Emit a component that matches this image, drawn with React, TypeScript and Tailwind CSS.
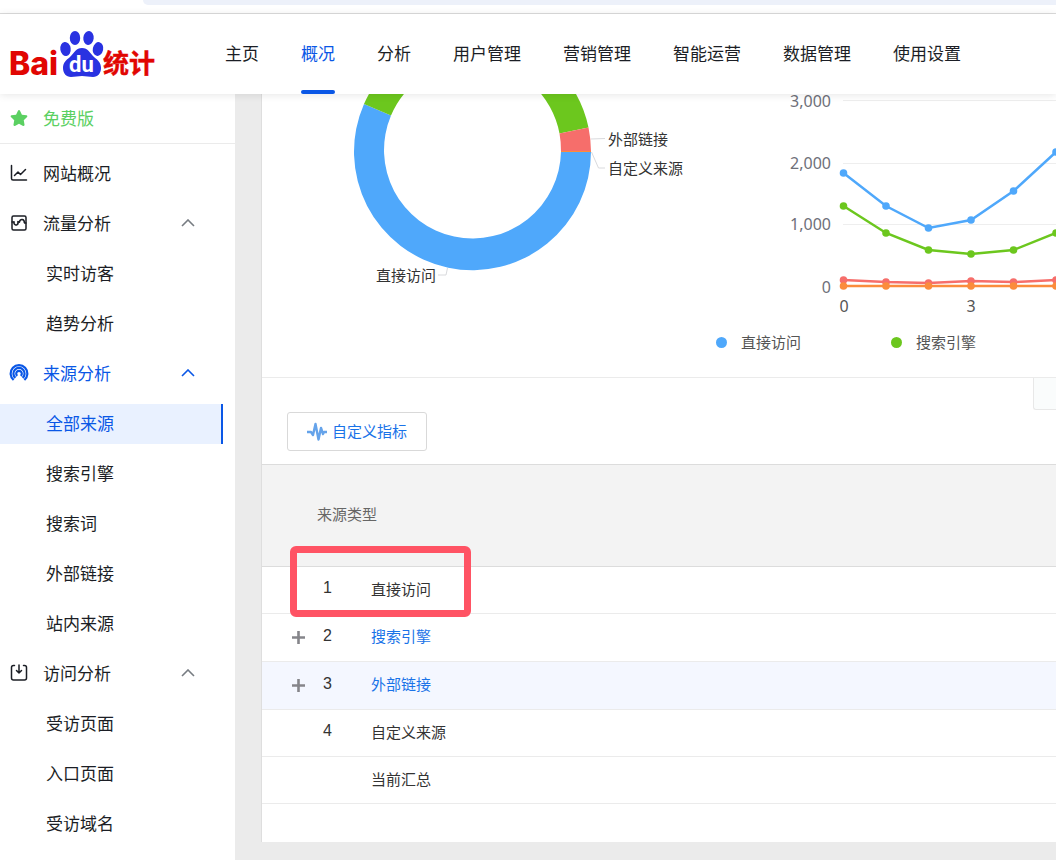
import { FaStar } from "react-icons/fa"

const navItems = ["主页", "概况", "分析", "用户管理", "营销管理", "智能运营", "数据管理", "使用设置"]

const menu = [
  { label: "网站概况", icon: "overview", active: false, children: [] },
  { label: "流量分析", icon: "traffic", active: false, children: ["实时访客", "趋势分析"] },
  { label: "来源分析", icon: "source", active: true, children: ["全部来源", "搜索引擎", "搜索词", "外部链接", "站内来源"] },
  { label: "访问分析", icon: "visit", active: false, children: ["受访页面", "入口页面", "受访域名"] },
]

const rows = [
  { id: "1", name: "直接访问", link: false, expandable: false },
  { id: "2", name: "搜索引擎", link: true, expandable: true },
  { id: "3", name: "外部链接", link: true, expandable: true },
  { id: "4", name: "自定义来源", link: false, expandable: false },
  { id: "", name: "当前汇总", link: false, expandable: false },
]

const series = [
  { color: "#4fa8fb", values: [79, 112, 134, 126, 97, 58] },
  { color: "#6cc71e", values: [112, 139, 156, 160, 156, 139] },
  { color: "#f66e6b", values: [186, 188, 189, 187, 188, 186] },
  { color: "#fb8c3c", values: [192, 192, 192, 192, 192, 192] },
]

function Logo() {
  return (
    <svg width="156" height="60" viewBox="0 0 156 60" role="img" aria-label="Baidu 统计">
      <text x="1" y="46" fontSize="32" fontWeight="800" fill="#e10602" fontFamily="Inter, sans-serif">Bai</text>
      <g fill="#2932e1">
        <ellipse cx="57.5" cy="20" rx="5.2" ry="7" transform="rotate(-8 57.5 20)" />
        <ellipse cx="67" cy="9" rx="5.2" ry="7" />
        <ellipse cx="80.5" cy="9" rx="5.2" ry="7" transform="rotate(6 80.5 9)" />
        <ellipse cx="90" cy="20" rx="5.2" ry="7" transform="rotate(12 90 20)" />
        <path d="M74 19C68 19 66 24 62 28C58 31 55 34 55 39C55 44 58 48 63 48C67 48 70 47 74 47C78 47 81 48 85 48C90 48 93 44 93 39C93 34 90 31 86 28C82 24 80 19 74 19Z" />
      </g>
      <text x="61" y="43" fontSize="22" fontWeight="700" fill="#fff" fontFamily="Roboto, sans-serif">du</text>
      <text x="95" y="44" fontSize="26" fontWeight="700" fill="#e10602" stroke="#e10602" strokeWidth="0.4" fontFamily="'Noto Sans CJK SC', sans-serif">统计</text>
    </svg>
  )
}

function MenuIcon({ name }: { name: string }) {
  return (
    <svg width="20" height="20" viewBox="0 0 20 20" fill="none" stroke="currentColor" strokeWidth="1.5" strokeLinecap="round" strokeLinejoin="round" aria-hidden="true">
      {name === "overview" && <path d="M2.5 2.5V15.5Q2.5 17 4 17H17.5M5.5 12.5L9 9L11.5 11.5L16.5 6.5" />}
      {name === "traffic" && (
        <>
          <rect x="3" y="3" width="14" height="14" rx="1.5" />
          <path d="M3 9H5M9 9H10.5M15.5 10H17" strokeWidth="1.3" />
          <path d="M5 9A2 2.4 0 0 0 9 10M10.5 9A2.4 2.8 0 0 1 15.3 9.5M9 8.5V11" />
        </>
      )}
      {name === "source" && (
        <g strokeWidth="2.2" strokeLinecap="butt">
          <path d="M4.6 17A8.4 8.4 0 1 1 15.4 17" />
          <path d="M6.4 14.8A5.6 5.6 0 1 1 13.6 14.8" />
          <path d="M8.3 12.8A2.8 2.8 0 1 1 11.7 12.8" />
        </g>
      )}
      {name === "visit" && <path d="M5.5 2.5H4.5Q2.5 2.5 2.5 4.5V15Q2.5 17 4.5 17H15.5Q17.5 17 17.5 15V4.5Q17.5 2.5 15.5 2.5H14.5M10 2V10M7.5 7.5L10 10L12.5 7.5" />}
    </svg>
  )
}

function Chevron() {
  return (
    <svg width="14" height="8" viewBox="0 0 14 8" fill="none" stroke="currentColor" strokeWidth="1.6" aria-hidden="true">
      <path d="M1 7L7 1L13 7" />
    </svg>
  )
}

function Sidebar() {
  return (
    <aside className="w-[235px] shrink-0 bg-white">
      <a href="#plan" className="flex h-[50px] items-center gap-[15px] border-b border-[#ebebeb] pb-[2px] pl-[10px] text-[17px] text-[#5bd062]">
        <FaStar className="size-[18px]" />
        免费版
      </a>
      <nav className="mt-[10px] flex flex-col gap-[10px]">
        {menu.map((group) => (
          <div key={group.label} className="flex flex-col gap-[10px]">
            <button
              type="button"
              className={`flex h-10 items-center pb-[2px] pl-[9px] pr-[40px] text-[17px] ${group.active ? "text-[#0a57e6]" : "text-[#1b1e25]"}`}
            >
              <MenuIcon name={group.icon} />
              <span className="ml-[14px] flex-1 text-left">{group.label}</span>
              {group.children.length > 0 && (
                <span className={group.active ? "text-[#0a57e6]" : "text-[#777c82]"}>
                  <Chevron />
                </span>
              )}
            </button>
            {group.children.map((child) => (
              <a
                key={child}
                href="#menu"
                className={`mr-3 flex h-10 items-center pb-[2px] pl-[46px] text-[17px] ${child === "全部来源" ? "border-r-2 border-[#0a57e6] bg-[#e9f1ff] text-[#0a57e6]" : "text-[#1b1e25]"}`}
              >
                {child}
              </a>
            ))}
          </div>
        ))}
      </nav>
    </aside>
  )
}

function DonutChart() {
  return (
    <svg width="438" height="283" viewBox="0 0 438 283" className="shrink-0" fontSize="15" fill="#333">
      <path d="M329 57.5A118.5 118.5 0 1 1 102 10L129 21.5A88.5 88.5 0 1 0 299 57.5Z" fill="#4fa8fb" />
      <path d="M102 10A118.5 118.5 0 0 1 326.5 33.5L297.5 39.5A88.5 88.5 0 0 0 129 21.5Z" fill="#6cc71e" />
      <path d="M326.5 33.5A118.5 118.5 0 0 1 329 57.5H299A88.5 88.5 0 0 0 297.5 39.5Z" fill="#f66e6b" />
      <path d="M299 57.5H329" stroke="#fb8c3c" />
      <path d="M329 45L343 44.5M329.5 58L336.5 74H343M185.5 174L184 181H176" stroke="#d9dadd" fill="none" />
      <text x="346" y="51">外部链接</text>
      <text x="346" y="80">自定义来源</text>
      <text x="114" y="187">直接访问</text>
    </svg>
  )
}

function LineChart() {
  return (
    <svg width="356" height="227" viewBox="0 0 356 227" fontSize="16" className="overflow-visible">
      <path d="M143 6.5H356M143 69.5H356M143 130.5H356" stroke="#eee" strokeWidth="1" />
      <g fill="#6e7079" textAnchor="end" fontFamily="'Noto Sans', sans-serif">
        <text x="131" y="13">3,000</text>
        <text x="131" y="75">2,000</text>
        <text x="131" y="136">1,000</text>
        <text x="131" y="199">0</text>
      </g>
      <g fill="#555" textAnchor="middle" fontFamily="'Noto Sans', sans-serif">
        <text x="144" y="218">0</text>
        <text x="271" y="218">3</text>
      </g>
      {series.map((s) => (
        <g key={s.color} fill={s.color}>
          <polyline points={s.values.map((v, i) => `${143.5 + i * 42.5},${v}`).join(" ")} fill="none" stroke={s.color} strokeWidth="2.5" />
          {s.values.map((v, i) => (
            <circle key={i} cx={143.5 + i * 42.5} cy={v} r="3.8" />
          ))}
        </g>
      ))}
    </svg>
  )
}

export default function App() {
  return (
    <div className="flex min-h-screen flex-col overflow-hidden bg-[#ebebeb] font-['Noto_Sans_CJK_SC',sans-serif] leading-normal">
      <div className="h-[14px] border-b border-[#dcdcdc] bg-white pl-[143px]">
        <div className="h-[5px] rounded-bl-xl bg-[#edf1fa]" />
      </div>
      <header className="relative z-10 flex h-20 items-stretch bg-white pl-2 shadow-[0_1px_8px_rgba(0,0,0,0.1)]">
        <a href="#home" className="mt-[15px] w-[156px] shrink-0">
          <Logo />
        </a>
        <nav className="ml-[61px] flex gap-[42px] text-[17px] text-[#1b1e25]">
          {navItems.map((item) => (
            <a
              key={item}
              href="#nav"
              className={`relative flex items-center whitespace-nowrap pb-[2px] ${item === "概况" ? "text-[#0a57e6]" : ""}`}
            >
              {item}
              {item === "概况" && <span className="absolute inset-x-0 bottom-0 h-1 rounded-sm bg-[#0a57e6]" />}
            </a>
          ))}
        </nav>
      </header>

      <div className="flex flex-1">
        <Sidebar />
        <main className="mb-[18px] ml-[26px] min-w-0 flex-1 overflow-x-clip border-l border-[#dedede] bg-white">
          <section className="flex h-[284px] border-b border-[#ebebeb]">
            <DonutChart />
            <div className="shrink-0">
              <LineChart />
              <ul className="ml-4 mt-[10px] flex gap-[90px] text-[15px] text-[#555]">
                <li className="flex items-center gap-[14px]">
                  <span className="size-[11px] rounded-full bg-[#4fa8fb]" />
                  直接访问
                </li>
                <li className="flex items-center gap-[14px]">
                  <span className="size-[11px] rounded-full bg-[#6cc71e]" />
                  搜索引擎
                </li>
              </ul>
            </div>
          </section>

          <div className="flex h-[86px] items-start justify-between pl-[25px]">
            <button type="button" className="mt-[34px] flex h-[39px] w-[140px] items-center justify-center gap-[5px] rounded-[3px] border border-[#d9d9d9] text-[15px] text-[#1a73e8]">
              <svg width="20" height="20" viewBox="0 0 20 20" fill="none" stroke="#65a3ea" strokeWidth="2.4" strokeLinejoin="round" aria-hidden="true">
                <path d="M0 10H4L6 13L8.5 2L11.5 17.5L14 6L16 12L17 10H20" />
              </svg>
              自定义指标
            </button>
            <div className="h-8 w-[23px] rounded-bl-[3px] border-b border-l border-[#e8e8e8] bg-[#fafcfc]" />
          </div>

          <div className="relative">
            <table className="w-full table-fixed border-collapse text-left text-[15px] text-[#333]">
              <colgroup>
                <col className="w-[55px]" />
                <col className="w-[54px]" />
                <col />
              </colgroup>
              <thead>
                <tr className="h-[102px] border-y border-[#dcdcdc] bg-[#f3f3f3]">
                  <th colSpan={3} className="pb-[2px] pl-[55px] font-normal text-[#666]">来源类型</th>
                </tr>
              </thead>
              <tbody>
                {rows.map((row) => (
                  <tr
                    key={row.name}
                    className={`border-b border-[#ebebeb] ${row.expandable ? "h-12" : "h-[47px]"} ${row.id === "3" ? "bg-[#f4f7ff]" : ""}`}
                  >
                    <td className="pl-[29px]">
                      {row.expandable && (
                        <button type="button" aria-label="展开" className="block text-[#85858a]">
                          <svg width="15" height="14" viewBox="0 0 15 14" stroke="currentColor" strokeWidth="2.6" aria-hidden="true">
                            <path d="M1 6.5H14M7.5 0V13" />
                          </svg>
                        </button>
                      )}
                    </td>
                    <td className="pb-1 pl-[6px] font-['Liberation_Sans',sans-serif] text-[16px]">{row.id}</td>
                    <td className="pb-[2px]">{row.link ? <a href="#source" className="text-[#1a73e8]">{row.name}</a> : row.name}</td>
                  </tr>
                ))}
              </tbody>
            </table>
            {/* highlight around the first row */}
            <div className="pointer-events-none absolute left-7 top-[82px] h-[71px] w-[181px] rounded-md border-7 border-[#ff5364]" />
          </div>
        </main>
      </div>
    </div>
  )
}
